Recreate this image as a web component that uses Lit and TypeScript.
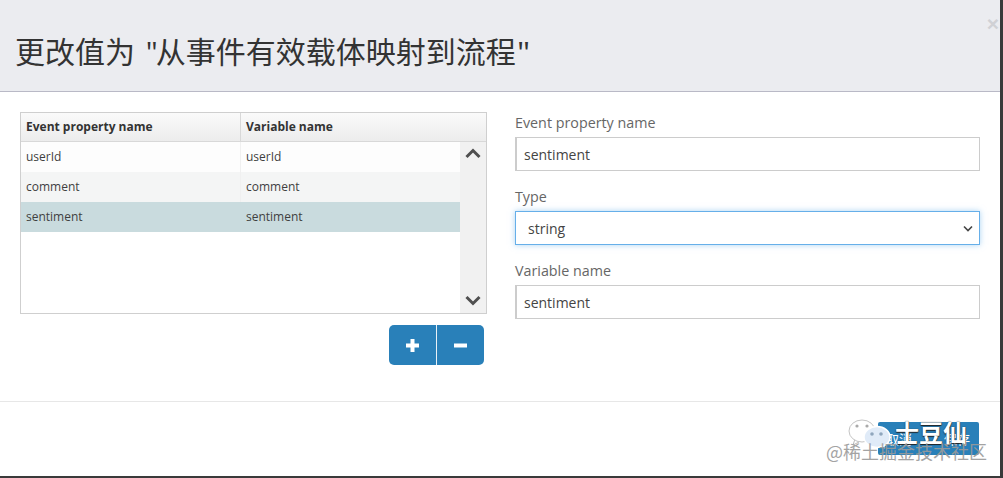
import { LitElement, html, css } from "lit";
import { customElement } from "lit/decorators.js";

@customElement("app-root")
export class AppRoot extends LitElement {
  static styles = css`
    :host { display: block; width: 1003px; height: 478px; background: #3a3a3a; overflow: hidden; position: relative;
      font-family: "Open Sans", "Noto Sans CJK SC", sans-serif; color: #3d3d3d; font-size: 13px; }
    .modal { width: 1000px; height: 476px; background: #fff; display: flex; flex-direction: column; box-sizing: border-box; }
    .head { height: 92px; box-sizing: border-box; background: #ebecf0; border-bottom: 1px solid #b9b9c6; padding: 32px 0 0 15px; position: relative; flex: none; }
    .title { font-size: 30px; line-height: 40px; color: #333; word-spacing: 3px; white-space: pre; }
    .q1 { margin-right: -2px; }
    .q2 { margin-left: 1px; display: inline-block; transform: scaleX(1.1); transform-origin: left; }
    .close { position: absolute; right: 1px; top: 11px; font-size: 21px; line-height: 26px; font-weight: 700; color: #d0d1d5; font-family: "Liberation Sans", sans-serif; }
    .body { height: 310px; flex: none; display: flex; box-sizing: border-box; padding: 20px 20px 0 20px; gap: 28px; border-bottom: 1px solid #e7e7e7; }
    .left { width: 467px; flex: none; display: flex; flex-direction: column; }
    .table { height: 202px; box-sizing: border-box; border: 1px solid #cfcfcf; display: flex; flex-direction: column; }
    .thead { height: 29px; flex: none; box-sizing: border-box; display: flex; background: linear-gradient(#fafafa, #ececec); border-bottom: 1px solid #d8d8d8; font-weight: 700; font-size: 12px; color: #333; }
    .thead .c1, .thead .c2 { line-height: 28px; }
    .c1 { width: 219px; padding-left: 5px; box-sizing: border-box; flex: none; }
    .c2 { padding-left: 5px; flex: 1; }
    .thead .c1 { border-right: 1px solid #d8d8d8; width: 220px; }
    .tbody { flex: 1; display: flex; min-height: 0; }
    .rows { width: 439px; flex: none; }
    .row { height: 30px; line-height: 30px; display: flex; font-size: 12px; color: #3f3f3f; background: #fdfdfd; }
    .row .c1 { width: 220px; border-right: 1px solid #f0f0f0; }
    .row.even { background: #f4f5f5; }
    .row.sel { background: #c9dbde; }
    .row.sel .c1 { border-right: none; }
    .scroll { flex: 1; background: #f1f1f1; display: flex; flex-direction: column; justify-content: space-between; align-items: center; padding: 6px 0 7px; }
    .scroll svg { display: block; }
    .btns { display: flex; justify-content: flex-end; margin: 11px 3px 0 0; }
    .btn { height: 40px; background: #2980b9; display: flex; align-items: center; justify-content: center; }
    .btn.plus { width: 47px; border-radius: 5px 0 0 5px; border-right: 1px solid #e8f1f7; }
    .btn.minus { width: 47px; border-radius: 0 5px 5px 0; }
    .right { flex: 1; display: flex; flex-direction: column; }
    .label { font-size: 14.3px; line-height: 20px; color: #666; margin: 1px 0 4px; }
    .input { height: 34px; box-sizing: border-box; border: 1px solid #ccc; border-left-width: 2px; padding-left: 7px; line-height: 33px; font-size: 14px; color: #444; margin-bottom: 15px; }
    .select { border: 1px solid #66afe9; box-shadow: 0 0 6px rgba(102,175,233,.55); padding-left: 12px; display: flex; justify-content: space-between; align-items: center; padding-right: 6px; }
    .foot { flex: 1; display: flex; justify-content: flex-end; align-items: flex-start; padding: 20px 21px 0 0; }
    .ok { width: 101px; height: 33px; background: #2980b9; border-radius: 2px; color: #fff; font-size: 13px; line-height: 34px; padding-left: 8px; box-sizing: border-box; display: flex; gap: 32px; }
    .wm { position: absolute; left: 850px; top: 412px; width: 150px; height: 60px; pointer-events: none; }
    .wm svg { position: absolute; left: -2px; top: 7px; }
    .wm1 { position: absolute; left: 45px; top: 3px; font-size: 24px; line-height: 34px; font-weight: 700; color: #fff; white-space: nowrap; text-shadow: 0 1px 1px #222, 0 0 1px #222; font-family: "Noto Sans CJK SC", sans-serif; }
    .wm2 { position: absolute; left: -24px; top: 27px; font-size: 18px; line-height: 24px; color: #9a9a9a; white-space: nowrap; opacity: .9; font-family: "Noto Sans CJK SC", sans-serif; }
  `;

  private chev(up: boolean) {
    return html`<svg width="16" height="11" viewBox="0 0 16 11"><path d="${up ? "M1.5 9 8 2.5 14.500 9" : "M1.500 2 8 8.500 14.500 2"}" fill="none" stroke="#505050" stroke-width="3"/></svg>`;
  }

  render() {
    const rows = [
      { n: "userId", cls: "" },
      { n: "comment", cls: "even" },
      { n: "sentiment", cls: "sel" },
    ];
    return html`
      <div class="modal">
        <div class="head">
          <div class="title">更改值为 <span class="q1">"</span>从事件有效载体映射到流程<span class="q2">"</span></div>
          <div class="close">×</div>
        </div>
        <div class="body">
          <div class="left">
            <div class="table">
              <div class="thead">
                <div class="c1">Event property name</div>
                <div class="c2">Variable name</div>
              </div>
              <div class="tbody">
                <div class="rows">
                  ${rows.map((r) => html`<div class="row ${r.cls}"><div class="c1">${r.n}</div><div class="c2">${r.n}</div></div>`)}
                </div>
                <div class="scroll">${this.chev(true)}${this.chev(false)}</div>
              </div>
            </div>
            <div class="btns">
              <div class="btn plus"><svg width="15" height="15" viewBox="0 0 15 15"><path d="M7.500 1v13M1 7.500h13" stroke="#fff" stroke-width="4"/></svg></div>
              <div class="btn minus"><svg width="13" height="5" viewBox="0 0 13 5"><path d="M0 2.500h13" stroke="#fff" stroke-width="4"/></svg></div>
            </div>
          </div>
          <div class="right">
            <div class="label">Event property name</div>
            <div class="input">sentiment</div>
            <div class="label">Type</div>
            <div class="input select"><span>string</span><svg width="10" height="7" viewBox="0 0 10 7"><path d="M1 1.500 5 5.500 9 1.500" fill="none" stroke="#444" stroke-width="1.600"/></svg></div>
            <div class="label">Variable name</div>
            <div class="input">sentiment</div>
          </div>
        </div>
        <div class="foot"><div class="ok"><span>取消</span><span>保存</span></div></div>
      </div>
      <div class="wm">
        <svg width="46" height="34" viewBox="0 0 46 34">
          <path d="M7 20 5 26 11 23Z" fill="#fff" stroke="#bbb"/>
          <ellipse cx="14" cy="12" rx="13" ry="11" fill="#fff" stroke="#c4c4c4"/>
          <circle cx="9" cy="7" r="1.600" fill="#aaa"/><circle cx="19" cy="7" r="1.600" fill="#aaa"/>
          <path d="M33 25 37 30 36 24Z" fill="#e0ebf8"/>
          <ellipse cx="29" cy="18" rx="13" ry="10.500" fill="#e0ebf8" stroke="#fff" stroke-width="1.500"/>
          <circle cx="24" cy="15" r="1.800" fill="#8fa6bd"/><circle cx="33" cy="15" r="1.800" fill="#8fa6bd"/>
        </svg>
        <div class="wm1">士豆仙</div>
        <div class="wm2">@稀土掘金技术社区</div>
      </div>
    `;
  }
}
